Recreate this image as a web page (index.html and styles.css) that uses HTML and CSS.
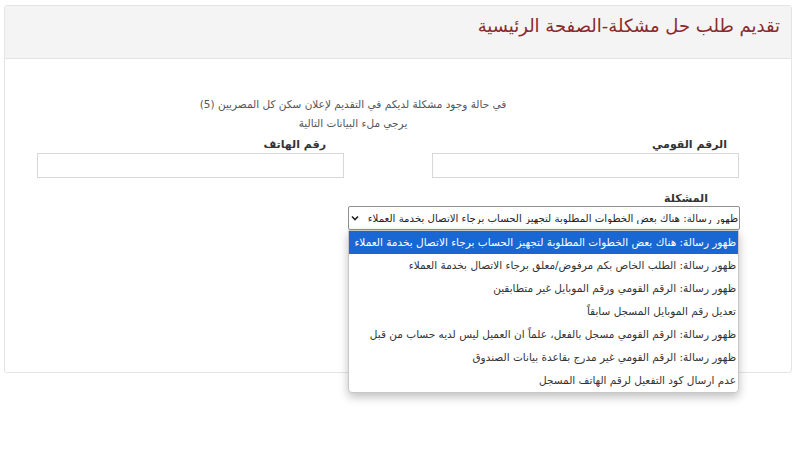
FILE: index.html
```html
<!DOCTYPE html>
<html lang="ar" dir="rtl">
<head>
<meta charset="utf-8">
<link rel="stylesheet" href="styles.css">
</head>
<body>
<div class="panel">
  <div class="panel-head">
    <h1 class="title">تقديم طلب حل مشكلة-الصفحة الرئيسية</h1>
  </div>
  <div class="panel-body">
    <div class="intro">
      <p>في حالة وجود مشكلة لديكم في التقديم لإعلان سكن كل المصريين (5)</p>
      <p>يرجي ملء البيانات التالية</p>
    </div>
    <div class="fields">
      <div class="field">
        <label class="lbl lbl-a">الرقم القومي</label>
        <div class="input"></div>
      </div>
      <div class="field">
        <label class="lbl lbl-b">رقم الهاتف</label>
        <div class="input"></div>
      </div>
    </div>
    <div class="problem">
      <label class="lbl lbl-p">المشكلة</label>
      <div class="select">
        <span class="sel-text">ظهور رسالة: هناك بعض الخطوات المطلوبة لتجهيز الحساب برجاء الاتصال بخدمة العملاء</span>
        <svg class="chev" width="8" height="6" viewBox="0 0 8 6"><path d="M1 1.5 L4 4.5 L7 1.5" fill="none" stroke="#222" stroke-width="1.6"/></svg>
        <ul class="menu">
          <li class="active">ظهور رسالة: هناك بعض الخطوات المطلوبة لتجهيز الحساب برجاء الاتصال بخدمة العملاء</li>
          <li>ظهور رسالة: الطلب الخاص بكم مرفوض/معلق برجاء الاتصال بخدمة العملاء</li>
          <li>ظهور رسالة: الرقم القومي ورقم الموبايل غير متطابقين</li>
          <li>تعديل رقم الموبايل المسجل سابقاً</li>
          <li>ظهور رسالة: الرقم القومي مسجل بالفعل، علماً ان العميل ليس لديه حساب من قبل</li>
          <li>ظهور رسالة: الرقم القومي غير مدرج بقاعدة بيانات الصندوق</li>
          <li>عدم ارسال كود التفعيل لرقم الهاتف المسجل</li>
        </ul>
      </div>
    </div>
  </div>
</div>
</body>
</html>
```
FILE: styles.css
```css
* { box-sizing: border-box; }
html, body { margin: 0; padding: 0; background: #fff; }
body {
  font-family: "DejaVu Sans", "Noto Sans", sans-serif;
  color: #444;
  width: 800px;
  height: 450px;
  overflow: hidden;
}
.panel {
  margin: 5px 8px 0 4px;
  height: 368px;
  border: 1px solid #e4e4e4;
  border-radius: 3px;
}
.panel-head {
  height: 53px;
  background: #f4f4f4;
  border-bottom: 1px solid #e4e4e4;
  padding: 6px 11px 0;
  display: flex;
  align-items: flex-start;
}
.title {
  margin: 0;
  font-weight: normal;
  font-size: 18px;
  line-height: 28px;
  color: #8a2a2a;
}
.panel-body {
  position: relative;
  padding-top: 36px;
}
.intro {
  width: 400px;
  margin-right: 238px;
  text-align: center;
  font-size: 10.5px;
  color: #555;
}
.intro p { margin: 0; line-height: 19px; }
.fields {
  display: grid;
  grid-template-columns: 307px 307px;
  column-gap: 88px;
  margin-right: 52px;
  margin-top: 5px;
}
.field { display: flex; flex-direction: column; }
.lbl {
  font-size: 11px;
  font-weight: bold;
  color: #333;
  line-height: 14px;
  height: 15px;
}
.lbl-a { padding-right: 12px; }
.lbl-b { padding-right: 18px; }
.input {
  height: 25px;
  border: 1px solid #d8d8d8;
  background: #fff;
}
.problem {
  margin-right: 51px;
  margin-top: 14px;
  width: 392px;
  display: flex;
  flex-direction: column;
}
.lbl-p { padding-right: 32px; height: 14px; }
.select {
  position: relative;
  height: 24px;
  border: 1px solid #8f8f8f;
  border-radius: 2px;
  display: flex;
  align-items: center;
  padding: 0 1px 0 2px;
  font-size: 10.2px;
  color: #222;
  white-space: nowrap;
}
.sel-text { flex: 1; overflow: hidden; }
.chev { flex: none; margin-right: 2px; }
.menu {
  position: absolute;
  top: 23px;
  right: 0;
  width: 391px;
  margin: 0;
  padding: 0;
  list-style: none;
  background: #fff;
  border: 1px solid #c8c8c8;
  border-radius: 0 0 4px 4px;
  box-shadow: 0 4px 10px rgba(0,0,0,0.25);
  overflow: hidden;
}
.menu li {
  height: 23px;
  line-height: 23px;
  padding: 0 2px;
  font-size: 10.5px;
  color: #333;
}
.menu li.active {
  background: #1967d2;
  color: #fff;
}
```
